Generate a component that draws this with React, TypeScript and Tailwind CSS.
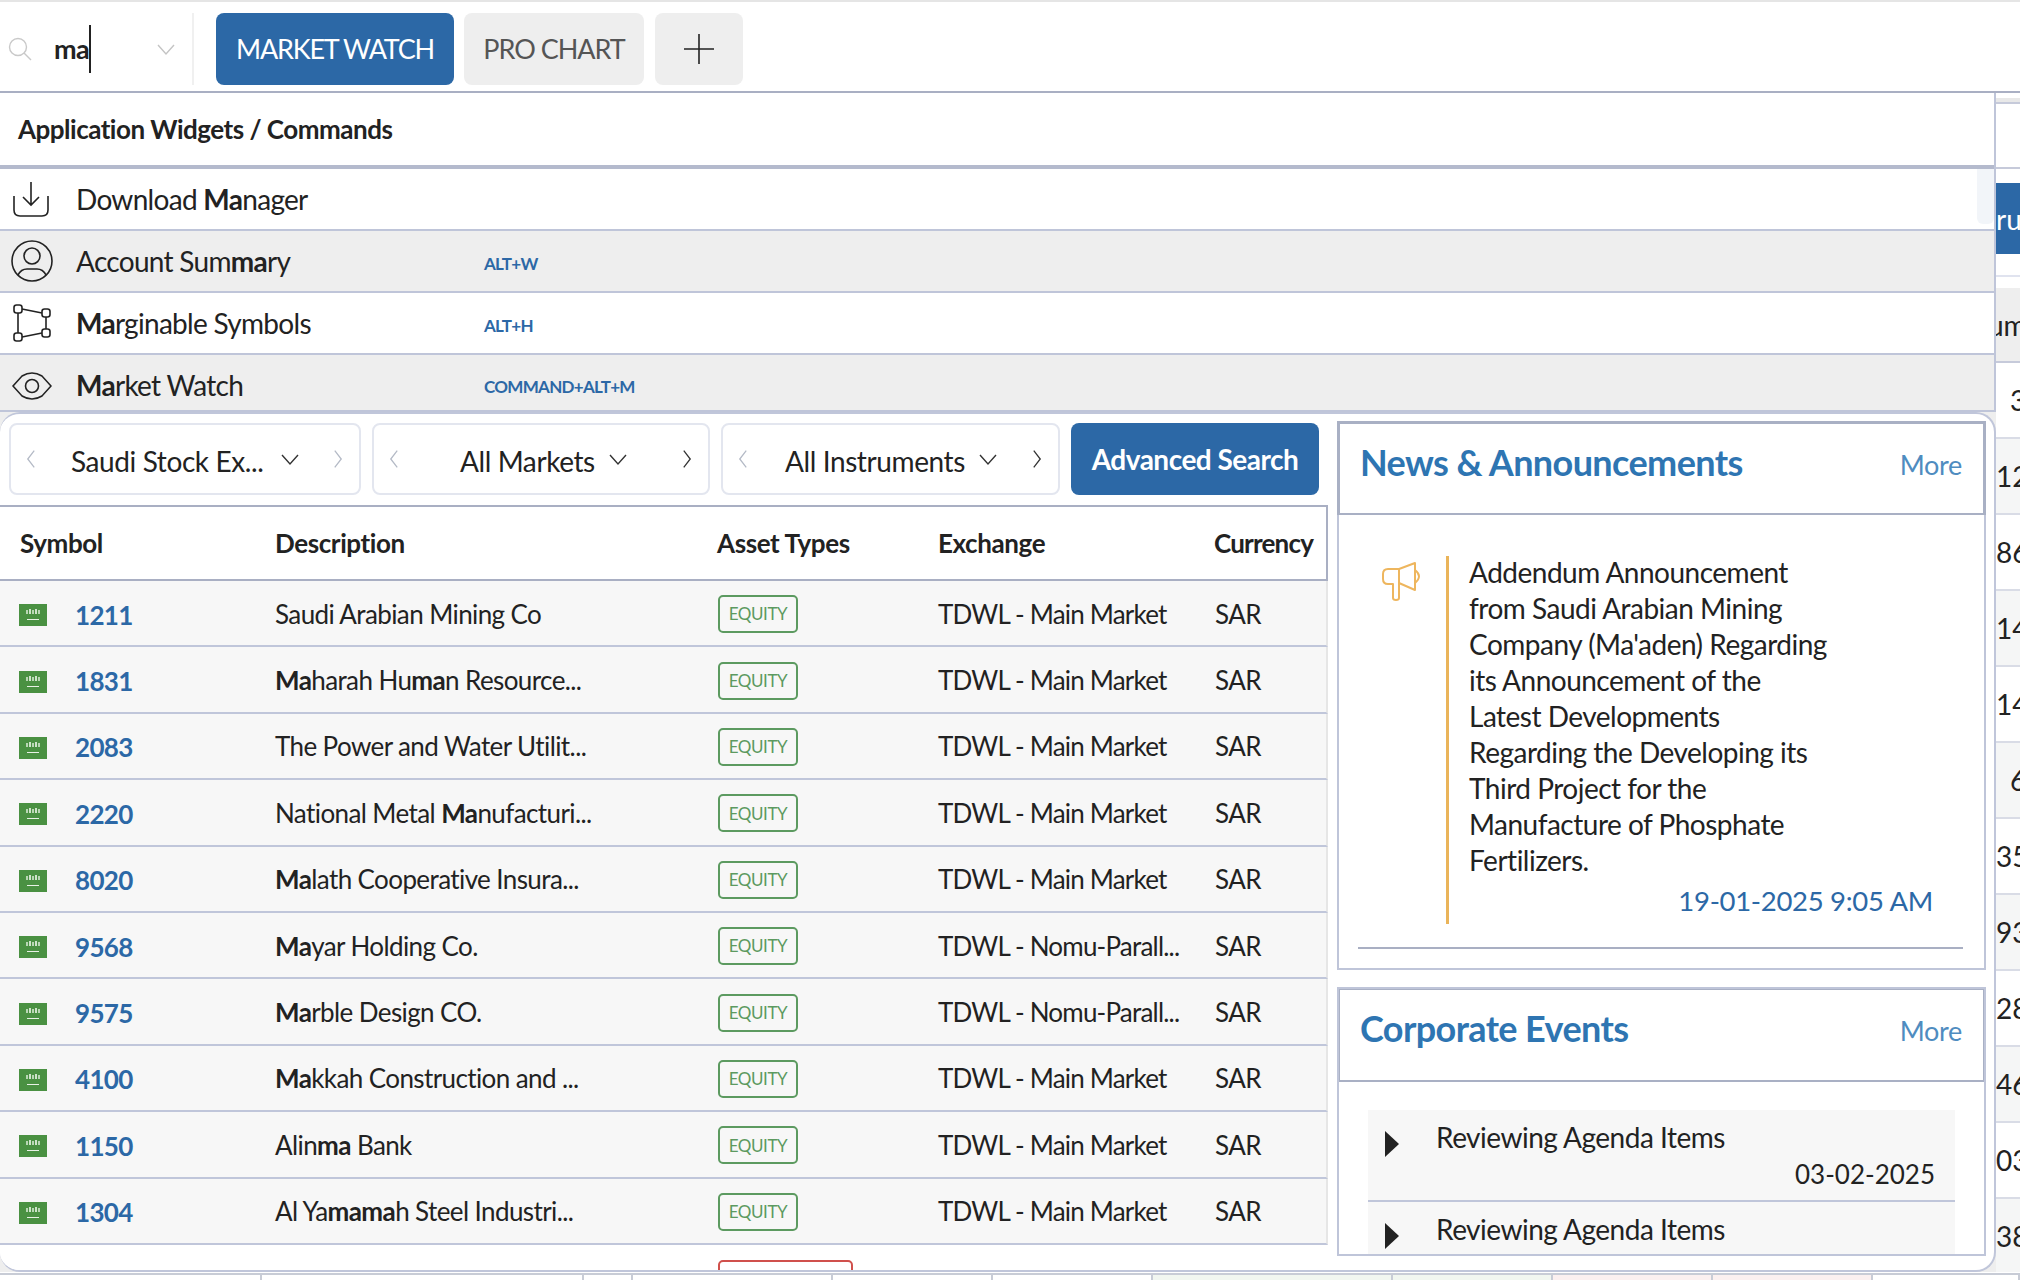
import React from 'react';

const FONT = "font-['Lato','Noto_Sans',sans-serif]";

const Chevron = ({ dir, className }: { dir: 'left' | 'right' | 'down'; className: string }) => {
  const d = dir === 'left' ? 'M10 1 L3 10 L10 19' : dir === 'right' ? 'M3 1 L10 10 L3 19' : 'M1 2 L9 11 L17 2';
  const box = dir === 'down' ? '0 0 18 13' : '0 0 13 20';
  return (
    <svg viewBox={box} fill="none" stroke="currentColor" strokeWidth="1.4" className={className}>
      <path d={d} />
    </svg>
  );
};

const SearchIcon = () => (
  <svg viewBox="0 0 24 24" fill="none" stroke="#c9c9c9" strokeWidth="1.4" className="w-[24px] h-[24px] ml-[8px] shrink-0">
    <circle cx="10" cy="10" r="8.5" />
    <path d="M16 16 L23 23" />
  </svg>
);

const DownloadIcon = () => (
  <svg viewBox="0 0 38 36" fill="none" stroke="#222" strokeWidth="1.6" className="w-[38px] h-[36px]">
    <path d="M19 1 V24 M11 16 L19 24 L27 16" />
    <path d="M2 15 V29 Q2 35 8 35 H30 Q36 35 36 29 V15" />
  </svg>
);

const AccountIcon = () => (
  <svg viewBox="0 0 42 42" fill="none" stroke="#222" strokeWidth="1.6" className="w-[42px] h-[42px] -ml-[1px]">
    <circle cx="21" cy="21" r="20" />
    <circle cx="21" cy="16" r="8" />
    <path d="M7 35 Q10 29 16 29 H26 Q32 29 35 35" />
  </svg>
);

const MarginIcon = () => (
  <svg viewBox="0 0 40 38" fill="none" stroke="#222" strokeWidth="1.6" className="w-[40px] h-[38px]">
    <rect x="2" y="1" width="8" height="8" rx="2.5" />
    <rect x="30" y="5" width="8" height="8" rx="2.5" />
    <rect x="30" y="25" width="8" height="8" rx="2.5" />
    <rect x="2" y="29" width="8" height="8" rx="2.5" />
    <path d="M10 5 L30 9 M34 13 V25 M30 29 L10 33 M6 9 V29" />
  </svg>
);

const EyeIcon = () => (
  <svg viewBox="0 0 40 28" fill="none" stroke="#222" strokeWidth="1.6" className="w-[40px] h-[28px] mt-[3px]">
    <path d="M1 14 L10 4 Q20 -2 30 4 L39 14 L30 24 Q20 30 10 24 Z" />
    <circle cx="20" cy="14" r="6.5" />
  </svg>
);

const Megaphone = () => (
  <svg viewBox="0 0 42 40" fill="none" stroke="#eeb65e" strokeWidth="2" strokeLinejoin="round" className="w-[42px] h-[40px]">
    <path d="M33 2 V29 L17 22 V37 Q17 39 14 39 Q11 39 11 37 V23 H6 Q1 23 1 18 V13 Q1 8 6 8 H17 Z" />
    <path d="M17 8 V22" />
    <path d="M33 9 Q41 15 33 22" />
  </svg>
);

const Flag = () => (
  <svg viewBox="0 0 28 22" className="w-[28px] h-[22px] shrink-0 mt-[2px]">
    <rect width="28" height="22" fill="#4a9142" />
    <rect x="7" y="6" width="2" height="4" fill="#b9d6b4" />
    <rect x="10" y="5" width="2" height="5" fill="#cfe3cb" />
    <rect x="13" y="6" width="2" height="4" fill="#b9d6b4" />
    <rect x="16" y="5" width="2" height="5" fill="#cfe3cb" />
    <rect x="19" y="6" width="2" height="4" fill="#b9d6b4" />
    <rect x="8" y="15" width="12" height="1" fill="#e8f1e5" />
  </svg>
);

const Triangle = () => (
  <svg viewBox="0 0 14 26" className="w-[14px] h-[26px] shrink-0">
    <path d="M0 0 L14 13 L0 26 Z" fill="#222" />
  </svg>
);

const commands = [
  { icon: <DownloadIcon />, label: <>Download <b>Ma</b>nager</>, key: '', bg: 'bg-white', h: 'h-[62px]' },
  { icon: <AccountIcon />, label: <>Account Sum<b>ma</b>ry</>, key: 'ALT+W', bg: 'bg-[#eeeeee]', h: 'h-[62px]' },
  { icon: <MarginIcon />, label: <><b>Ma</b>rginable Symbols</>, key: 'ALT+H', bg: 'bg-white', h: 'h-[62px]' },
  { icon: <EyeIcon />, label: <><b>Ma</b>rket Watch</>, key: 'COMMAND+ALT+M', bg: 'bg-[#eeeeee] pt-[4px]', h: 'h-[57px]' },
];

const rows: { sym: string; desc: React.ReactNode; ex: string }[] = [
  { sym: '1211', desc: 'Saudi Arabian Mining Co', ex: 'TDWL - Main Market' },
  { sym: '1831', desc: <><b>Ma</b>harah Hu<b>ma</b>n Resource...</>, ex: 'TDWL - Main Market' },
  { sym: '2083', desc: 'The Power and Water Utilit...', ex: 'TDWL - Main Market' },
  { sym: '2220', desc: <>National Metal <b>Ma</b>nufacturi...</>, ex: 'TDWL - Main Market' },
  { sym: '8020', desc: <><b>Ma</b>lath Cooperative Insura...</>, ex: 'TDWL - Main Market' },
  { sym: '9568', desc: <><b>Ma</b>yar Holding Co.</>, ex: 'TDWL - Nomu-Parall...' },
  { sym: '9575', desc: <><b>Ma</b>rble Design CO.</>, ex: 'TDWL - Nomu-Parall...' },
  { sym: '4100', desc: <><b>Ma</b>kkah Construction and ...</>, ex: 'TDWL - Main Market' },
  { sym: '1150', desc: <>Alin<b>ma</b> Bank</>, ex: 'TDWL - Main Market' },
  { sym: '1304', desc: <>Al Ya<b>mama</b>h Steel Industri...</>, ex: 'TDWL - Main Market' },
];

const newsLines = [
  'Addendum Announcement',
  'from Saudi Arabian Mining',
  "Company (Ma'aden) Regarding",
  'its Announcement of the',
  'Latest Developments',
  'Regarding the Developing its',
  'Third Project for the',
  'Manufacture of Phosphate',
  'Fertilizers.',
];

const sliver = [
  { t: '3', bg: 'bg-white', pl: 'pl-[14px]' },
  { t: '12', bg: 'bg-[#f5f6f6]', pl: 'pl-0' },
  { t: '86', bg: 'bg-white', pl: 'pl-0' },
  { t: '14', bg: 'bg-[#f5f6f6]', pl: 'pl-0' },
  { t: '14', bg: 'bg-white', pl: 'pl-0' },
  { t: '6', bg: 'bg-[#f5f6f6]', pl: 'pl-[14px]' },
  { t: '35', bg: 'bg-white', pl: 'pl-0' },
  { t: '93', bg: 'bg-[#f5f6f6]', pl: 'pl-0' },
  { t: '28', bg: 'bg-white', pl: 'pl-0' },
  { t: '46', bg: 'bg-[#f5f6f6]', pl: 'pl-0' },
  { t: '03', bg: 'bg-white', pl: 'pl-0' },
  { t: '38', bg: 'bg-[#f5f6f6]', pl: 'pl-0' },
];

const Selector = ({ label, w, arrow, ml, gap }: { label: string; w: string; arrow: string; ml: string; gap: string }) => (
  <div className={`${w} h-[72px] border-2 border-[#e3e6ef] rounded-[8px] flex items-center bg-white pl-[14px] pr-[15px] shrink-0`}>
    <Chevron dir="left" className="w-[12px] h-[20px] text-[#b4bac6] shrink-0" />
    <span className={`${ml} pt-[3px] text-[28px] tracking-[-0.4px] text-[#222] whitespace-nowrap`}>{label}</span>
    <Chevron dir="down" className={`${gap} w-[18px] h-[13px] text-[#333] shrink-0`} />
    <Chevron dir="right" className={`ml-auto w-[12px] h-[20px] shrink-0 ${arrow}`} />
  </div>
);

const CardHeader = ({ title, h }: { title: string; h: string }) => (
  <div className={`${h} shrink-0 border-[3px] border-[#a9b0c4] border-b-2 flex justify-between pl-[20px] pr-[21px] -mx-[2px] -mt-[2px] bg-white`}>
    <span className="pt-[15px] text-[36px] leading-[46px] font-bold tracking-[-0.6px] text-[#2e75b2]">{title}</span>
    <span className="pt-[18px] text-[27px] leading-[46px] tracking-[-0.3px] text-[#4f8cc0]">More</span>
  </div>
);

export default function App() {
  return (
    <div className={`${FONT} w-[2020px] h-[1280px] overflow-hidden bg-white flex flex-col text-[#222]`}>
      {/* top bar */}
      <div className="h-[93px] shrink-0 border-t-2 border-t-[#e5e5e5] border-b-2 border-b-[#a9afc3] flex items-center pt-[5px] bg-white">
        <SearchIcon />
        <div className="ml-[22px] w-[104px] flex items-center">
          <span className="text-[27px] font-bold tracking-[-0.6px] text-[#222]">ma</span>
          <span className="w-[2px] h-[48px] bg-[#222]" />
        </div>
        <Chevron dir="down" className="w-[18px] h-[13px] text-[#c4c4c4] -ml-[1px]" />
        <div className="ml-[17px] w-[2px] h-[72px] bg-[#f0f0f0]" />
        <button className="ml-[22px] w-[238px] h-[72px] rounded-[8px] bg-[#2c68a6] text-white text-[27px] tracking-[-1.2px]">MARKET WATCH</button>
        <button className="ml-[10px] w-[180px] h-[72px] rounded-[8px] bg-[#eeeeee] text-[#555] text-[27px] tracking-[-1px]">PRO CHART</button>
        <button className="ml-[11px] w-[88px] h-[72px] rounded-[8px] bg-[#eeeeee] flex items-center justify-center">
          <svg viewBox="0 0 30 30" stroke="#222" strokeWidth="1.6" className="w-[30px] h-[30px]"><path d="M15 0 V30 M0 15 H30" /></svg>
        </button>
      </div>

      <div className="flex h-[1179px] shrink-0">
        <div className="w-[1996px] shrink-0 bg-[#eeeeee] flex flex-col">
          {/* command palette */}
          <div className="h-[319px] shrink-0 border-r-2 border-[#bfc5d9] bg-white relative">
            <div className="h-[76px] border-b-4 border-[#b4bacd] flex items-center pl-[18px] text-[26px] font-bold tracking-[-0.5px] text-[#222]">
              Application Widgets / Commands
            </div>
            {commands.map((c, i) => (
              <div key={i} className={`${c.h} ${c.bg} border-b-2 border-[#bfc5d9] flex items-center`}>
                <div className="w-[76px] pl-[12px] shrink-0">{c.icon}</div>
                <span className="w-[408px] shrink-0 text-[28px] tracking-[-0.7px] text-[#222]">{c.label}</span>
                <span className="pt-[5px] text-[17px] font-bold tracking-[-0.7px] text-[#2c68a6]">{c.key}</span>
              </div>
            ))}
            <div className="absolute right-0 top-[76px] w-[17px] h-[55px] bg-[#f2f5f9] rounded-b-[6px]" />
          </div>

          {/* search panel */}
          <div className="h-[860px] shrink-0 bg-white border-r-2 border-b-2 border-t-2 border-[#c0c6da] rounded-[20px] overflow-hidden flex">
            <div className="w-[1329px] shrink-0 flex flex-col overflow-hidden pr-[1px]">
              <div className="flex pl-[9px] gap-[11px] pt-[9px] h-[93px] shrink-0 border-b-2 border-[#a9afc3]">
                <Selector label="Saudi Stock Ex..." w="w-[352px]" arrow="text-[#b4bac6]" ml="ml-[34px]" gap="ml-[18px]" />
                <Selector label="All Markets" w="w-[338px]" arrow="text-[#333]" ml="ml-[60px]" gap="ml-[14px]" />
                <Selector label="All Instruments" w="w-[339px]" arrow="text-[#333]" ml="ml-[36px]" gap="ml-[14px]" />
                <button className="w-[248px] h-[72px] rounded-[8px] bg-[#2c68a6] text-white font-bold text-[28px] tracking-[-0.5px] shrink-0">Advanced Search</button>
              </div>
              <div className="h-[74px] shrink-0 border-b-2 border-r-2 border-[#a9afc3] grid grid-cols-[275px_442px_221px_276px_1fr] items-center text-[26px] font-bold tracking-[-0.4px] text-[#222]">
                <span className="pl-[20px]">Symbol</span>
                <span>Description</span>
                <span>Asset Types</span>
                <span>Exchange</span>
                <span className="tracking-[-0.8px] whitespace-nowrap">Currency</span>
              </div>
              {rows.map((r) => (
                <div key={r.sym} className="h-[66.4px] shrink-0 pt-[2px] bg-[#f7f7f7] border-b-2 border-r-2 border-b-[#c0c6da] border-r-[#e6e6e6] grid grid-cols-[275px_443px_220px_277px_1fr] items-center text-[26px] tracking-[-0.6px] text-[#222]">
                  <div className="flex items-center pl-[19px]">
                    <Flag />
                    <span className="ml-[28px] pt-[2px] text-[26px] font-bold tracking-[-0.7px] text-[#2c68a6]">{r.sym}</span>
                  </div>
                  <span className="whitespace-nowrap">{r.desc}</span>
                  <span className="w-[80px] h-[38px] border-2 border-[#5c9a60] rounded-[5px] flex items-center justify-center text-[17px] tracking-[-0.4px] text-[#5c9a60]">EQUITY</span>
                  <span className="whitespace-nowrap tracking-[-0.8px]">{r.ex}</span>
                  <span>SAR</span>
                </div>
              ))}
              <div className="h-[40px] shrink-0 bg-white pl-[718px] pt-[15px]">
                <div className="w-[135px] h-[38px] border-2 border-[#d0504c] rounded-[5px]" />
              </div>
            </div>

            <div className="flex-1 min-w-0 pl-[8px] pr-[8px] pt-[7px] flex flex-col gap-[17px]">
              {/* news */}
              <div className="h-[549px] shrink-0 border-2 border-[#bfc5d9] bg-white flex flex-col">
                <CardHeader title="News & Announcements" h="h-[94px]" />
                <div className="flex ml-[19px] mr-[21px] h-[434px] border-b-2 border-[#a9afc3] pt-[41px] items-start shrink-0">
                  <div className="w-[88px] pl-[24px] pt-[5px] shrink-0"><Megaphone /></div>
                  <div className="border-l-[3px] border-[#eab45a] pl-[20px] w-[487px] h-[368px] shrink-0">
                    <div className="text-[28px] leading-[36px] tracking-[-0.5px] text-[#222] -mt-[2px]">
                      {newsLines.map((l) => <div key={l} className="whitespace-nowrap">{l}</div>)}
                    </div>
                    <div className="mt-[3px] text-right text-[27.5px] leading-[40px] tracking-[-0.3px] text-[#2c68a6]">19-01-2025 9:05 AM</div>
                  </div>
                </div>
              </div>
              {/* corporate events */}
              <div className="h-[269px] shrink-0 border-2 border-[#bfc5d9] bg-white flex flex-col overflow-hidden">
                <CardHeader title="Corporate Events" h="h-[95px]" />
                <div className="mx-[29px] mt-[28px] bg-[#f7f7f7]">
                  <div className="h-[92px] border-b-2 border-[#c0c6da] relative flex pl-[17px] pt-[21px]">
                    <Triangle />
                    <div className="ml-[37px] -mt-[12px] text-[28px] leading-[36px] tracking-[-0.5px] whitespace-nowrap">Reviewing Agenda Items</div>
                    <div className="absolute right-[20px] top-[46px] text-[26px] leading-[36px]">03-02-2025</div>
                  </div>
                  <div className="flex pl-[17px] pt-[21px] h-[60px]">
                    <Triangle />
                    <div className="ml-[37px] -mt-[12px] text-[28px] leading-[36px] tracking-[-0.5px] whitespace-nowrap">Reviewing Agenda Items</div>
                  </div>
                </div>
              </div>
            </div>
          </div>
        </div>

        {/* table behind the palette, right edge */}
        <div className="flex-1 min-w-0 overflow-hidden text-[28px] text-[#222] whitespace-nowrap bg-white flex flex-col">
          <div className="h-[5px] shrink-0" />
          <div className="h-[6px] shrink-0 bg-[#e8e8e8] border-b-2 border-[#c6cada]" />
          <div className="h-[65px] shrink-0 border-b-2 border-[#c6cada]" />
          <div className="h-[14px] shrink-0" />
          <div className="h-[71px] shrink-0 bg-[#2c68a6] text-white flex items-center">ru</div>
          <div className="h-[23px] shrink-0 border-b-2 border-[#e0e3ef]" />
          <div className="h-[11px] shrink-0" />
          <div className="h-[75px] shrink-0 bg-[#eeeeee] border-b-2 border-[#c6cada] flex items-center -ml-[8px]">um</div>
          {sliver.map((s, i) => (
            <div key={i} className={`${s.bg} ${s.pl} h-[76px] shrink-0 border-b-2 border-[#d9dce6] flex items-center`}>{s.t}</div>
          ))}
        </div>
      </div>

      {/* table row under the panel */}
      <div className="h-[8px] shrink-0 flex border-t border-white">
        {[
          'w-[262px] bg-white',
          'w-[322px] bg-white',
          'w-[49px] bg-white',
          'w-[200px] bg-white',
          'w-[160px] bg-white',
          'w-[160px] bg-white',
          'w-[240px] bg-[#f1f6f0]',
          'w-[160px] bg-[#f1f6f0]',
          'w-[160px] bg-[#fbf0f0]',
          'w-[160px] bg-[#fbf0f0]',
          'flex-1 bg-white',
        ].map((c, i) => (
          <div key={i} className={`${c} border-t-2 border-r-2 border-[#c8ccd6]`} />
        ))}
      </div>
    </div>
  );
}
